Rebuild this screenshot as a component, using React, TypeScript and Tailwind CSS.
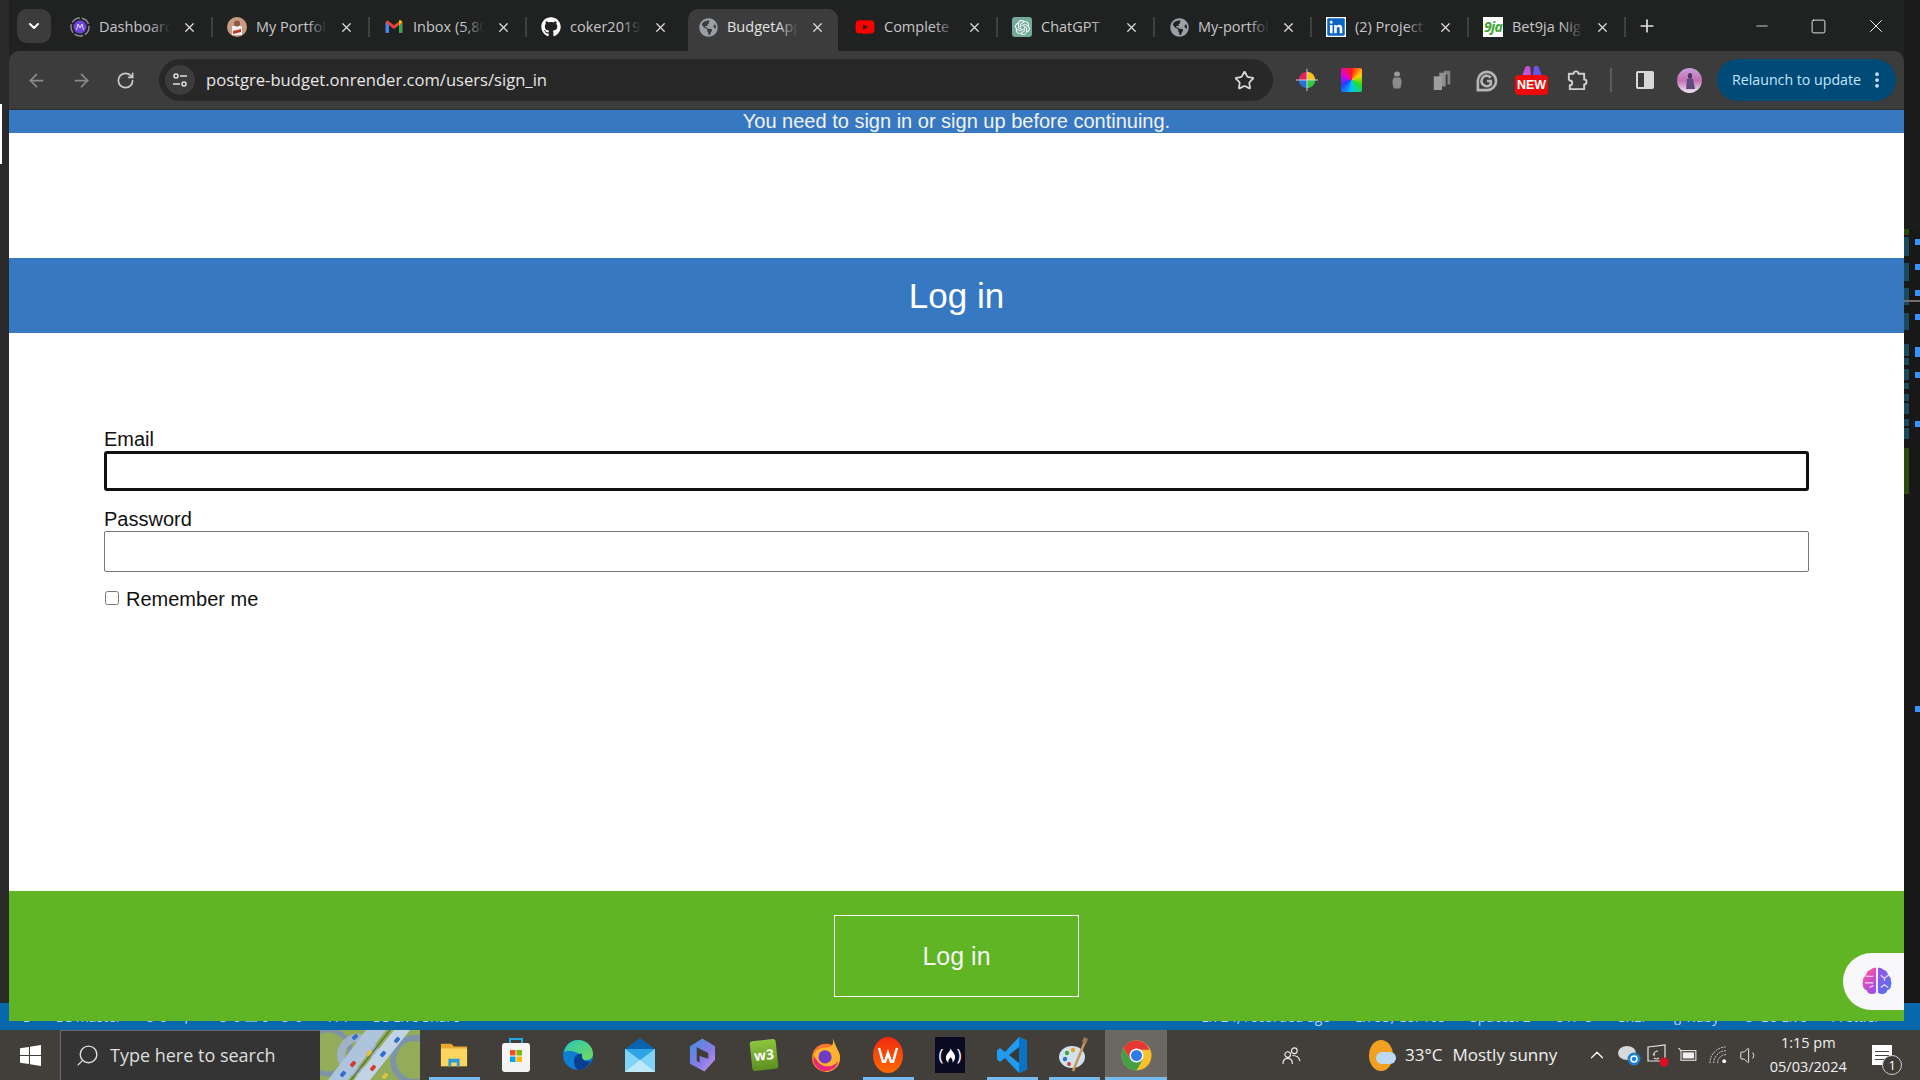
import type { ReactNode } from "react";
import {
  ArrowLeft,
  ArrowRight,
  ChevronDown,
  ChevronUp,
  EllipsisVertical,
  Minus,
  Plus,
  RotateCw,
  Search,
  Square,
  Star,
  Volume1,
  X,
} from "lucide-react";
import { FaGlobeAmericas, FaGithub, FaLinkedin, FaYoutube } from "react-icons/fa";
import { SiOpenai } from "react-icons/si";

const GmailIcon = () => (
  <svg viewBox="0 0 24 24" className="w-5 h-5">
    <path d="M2 6v13h4V10l6 4.500 6-4.500v9h4V6l-2-2-8 6-8-6z" fill="#ea4335" />
    <path d="M2 6v13h4V10z" fill="#4285f4" />
    <path d="M18 10v9h4V6z" fill="#34a853" />
    <path d="M18 4l2 0 2 2-4 4z" fill="#fbbc04" />
  </svg>
);

const DashboardIcon = () => (
  <svg viewBox="0 0 20 20" className="w-5 h-5">
    <circle cx="10" cy="10" r="9" fill="none" stroke="#8a8a94" strokeWidth="1.500" strokeDasharray="9 2" />
    <circle cx="10" cy="10" r="6.500" fill="#6d46e0" />
    <path d="M6.500 13l1.500-6 2 4 2-4 1.500 6" fill="none" stroke="#e6dcff" strokeWidth="1" />
  </svg>
);

const AvatarIcon = ({ tone = "#c99b84" }: { tone?: string }) => (
  <svg viewBox="0 0 20 20" className="w-full h-full">
    <circle cx="10" cy="10" r="10" fill={tone} />
    <rect x="5" y="9" width="10" height="9" fill="#f2efec" />
    <circle cx="10" cy="6.500" r="3" fill="#8a5a44" />
    <path d="M6 14l8-2v3l-8 2z" fill="#c0392b" />
  </svg>
);

const tabs: { title: string; icon: ReactNode; active?: boolean }[] = [
  { title: "Dashboard", icon: <DashboardIcon /> },
  { title: "My Portfolio", icon: <span className="block w-5 h-5"><AvatarIcon /></span> },
  { title: "Inbox (5,807)", icon: <GmailIcon /> },
  { title: "coker2019", icon: <FaGithub className="w-5 h-5 text-white" /> },
  { title: "BudgetApp", icon: <FaGlobeAmericas className="w-[19px] h-[19px] text-[#9aa0a6]" />, active: true },
  { title: "Complete", icon: <FaYoutube className="w-[22px] h-[22px] text-[#ff0000]" /> },
  {
    title: "ChatGPT",
    icon: (
      <span className="w-5 h-5 rounded-[3px] bg-[#74aa9c] flex items-center justify-center">
        <SiOpenai className="w-[15px] h-[15px] text-white" />
      </span>
    ),
  },
  { title: "My-portfolio", icon: <FaGlobeAmericas className="w-[19px] h-[19px] text-[#9aa0a6]" /> },
  { title: "(2) Project", icon: <FaLinkedin className="w-5 h-5 text-[#0a66c2] bg-white" /> },
  {
    title: "Bet9ja Nigeria",
    icon: (
      <span className="w-5 h-5 bg-white text-[#3fa535] text-[14px] leading-5 font-bold italic text-center tracking-tighter">9ja</span>
    ),
  },
];

function Tab({ title, icon, active }: { title: string; icon: ReactNode; active?: boolean }) {
  const hideSep = active || title === "coker2019";
  return (
    <div className="relative w-[157px] h-[42px] shrink-0 flex items-center">
      {active && <div className="absolute left-[4px] right-[3px] top-0 bottom-0 bg-[#3c3c3c] rounded-t-[10px]" />}
      <div className="relative flex items-center pl-[14px] w-full -mt-[6px]">
        <span className="w-5 h-5 shrink-0 flex items-center justify-center">{icon}</span>
        <div className="relative ml-[9px] w-[71px] overflow-hidden whitespace-nowrap">
          <span className={active ? "text-[#e3e3e3]" : "text-[#c7c7c7]"}>{title}</span>
          <div
            className={`absolute right-0 top-0 bottom-0 w-5 bg-gradient-to-r from-transparent ${
              active ? "to-[#3c3c3c]" : "to-[#202222]"
            }`}
          />
        </div>
        <X className="ml-[12px] w-[15px] h-[15px] text-[#dcdcdc]" strokeWidth={2} />
      </div>
      {!hideSep && <div className="absolute right-0 top-[8px] w-[2px] h-5 bg-[#3f4141]" />}
    </div>
  );
}

const ColorWheel = () => (
  <svg viewBox="0 0 24 24" className="w-[22px] h-[22px]">
    <path d="M12 12L12 3A9 9 0 0 1 21 12z" fill="#f0c419" />
    <path d="M12 12L21 12A9 9 0 0 1 12 21z" fill="#2ecc40" />
    <path d="M12 12L12 21A9 9 0 0 1 3 12z" fill="#2a6fdb" />
    <path d="M12 12L3 12A9 9 0 0 1 12 3z" fill="#e0245e" />
    <path d="M12 0v24M0 12h24" stroke="#ddd" strokeWidth="1" />
  </svg>
);

const RainbowSquare = () => (
  <span className="block w-[21px] h-[24px] rounded-[2px] bg-[conic-gradient(#ff1a1a,#ffd000,#22dd22,#00c8ff,#2040ff,#e000e0,#ff1a1a)]" />
);

const GreyBottle = () => (
  <svg viewBox="0 0 14 24" className="w-[12px] h-[24px]">
    <ellipse cx="7" cy="5" rx="3.500" ry="3" fill="#9a9a9a" />
    <path d="M3 9h8l1.500 5-1.500 8H3l-1.500-8z" fill="#8c8c8c" />
  </svg>
);

const CopyPages = () => (
  <svg viewBox="0 0 24 24" className="w-[22px] h-[22px]" fill="#9e9e9e">
    <path d="M14 2h7v15h-3V6h-4z" opacity="0.7" />
    <path d="M9 4h7v15H9z" opacity="0.85" />
    <path d="M3 8h9v15H3z" />
  </svg>
);

const GrammarlyG = () => (
  <svg viewBox="0 0 24 24" className="w-[23px] h-[23px]" fill="none" stroke="#b5b5b5" strokeWidth="2.800">
    <path d="M3 22V12a9.500 9.500 0 1 1 9.500 10z" />
    <path d="M16.500 9a5.500 5.500 0 1 0 0 7V12.500H12.500" />
  </svg>
);

const NewBadge = () => (
  <div className="flex flex-col items-center w-[33px]">
    <svg viewBox="0 0 24 12" className="w-[22px] h-[11px] -mb-[1px]">
      <path d="M1 12L5 2q2-2 5 0l1 10z" fill="#c552d8" />
      <path d="M13 12l1-10q3-2 5 0l4 10z" fill="#6a55e8" />
    </svg>
    <span className="w-[33px] h-[20px] rounded-[4px] bg-[#ee0a0a] text-white text-[12.500px] leading-5 font-bold text-center font-['Liberation_Sans',sans-serif]">
      NEW
    </span>
  </div>
);

const PuzzleIcon = () => (
  <svg viewBox="0 0 24 24" className="w-[23px] h-[23px]" fill="none" stroke="#d0d0d0" strokeWidth="2" strokeLinejoin="round">
    <path d="M4 5h5a2.500 2.500 0 0 1 5 0h6v6a2.500 2.500 0 0 1 0 5v5H5v-4a2.500 2.500 0 0 0 0-5l-1-1z" />
  </svg>
);

const SidePanelIcon = () => (
  <span className="w-[18px] h-[18px] rounded-[2px] border-2 border-[#d8d8d8] flex justify-end">
    <span className="w-[8px] bg-[#d8d8d8]" />
  </span>
);

const SiteInfoIcon = () => (
  <svg viewBox="0 0 16 16" className="w-[16px] h-[16px]" fill="none" stroke="#e0e0e0" strokeWidth="1.500">
    <circle cx="4" cy="4" r="2" />
    <path d="M8 4h7M1 12h7" />
    <circle cx="12" cy="12" r="2" />
  </svg>
);

const ProfilePicture = () => (
  <svg viewBox="0 0 25 25" className="w-[25px] h-[25px]">
    <defs>
      <linearGradient id="sky" x1="0" y1="0" x2="0" y2="1">
        <stop offset="0" stopColor="#c9a0dc" />
        <stop offset="0.5" stopColor="#c46fb4" />
        <stop offset="1" stopColor="#efe8f2" />
      </linearGradient>
    </defs>
    <circle cx="12.500" cy="12.500" r="12.500" fill="url(#sky)" />
    <ellipse cx="13" cy="8" rx="2.200" ry="3" fill="#4c3a62" />
    <path d="M10 11h6l2 10H9z" fill="#5e4a7c" />
  </svg>
);

function BrowserChrome() {
  return (
    <div className="font-['Open_Sans',sans-serif]">
      <div className="h-[51px] bg-[#202222] flex text-[14.500px] pt-[9px] pl-[8px]">
        <div className="w-[34px] h-[34px] mr-[5px] rounded-[10px] bg-[#3c3c3c] flex items-center justify-center shrink-0">
          <ChevronDown className="w-[16px] h-[16px] text-white" strokeWidth={3} />
        </div>
        {tabs.map((t) => (
          <Tab key={t.title} {...t} />
        ))}
        <div className="w-[42px] h-[34px] flex items-center justify-center shrink-0">
          <Plus className="w-[20px] h-[20px] text-[#e0e0e0]" strokeWidth={2} />
        </div>
        <div className="ml-auto flex h-[34px] text-white">
          <div className="w-[57px] flex items-center justify-center">
            <Minus className="w-[18px] h-[18px]" strokeWidth={1} />
          </div>
          <div className="w-[57px] flex items-center justify-center">
            <Square className="w-[17px] h-[17px]" strokeWidth={1.200} />
          </div>
          <div className="w-[57px] flex items-center justify-center">
            <X className="w-[22px] h-[22px]" strokeWidth={1} />
          </div>
        </div>
      </div>
      <div className="h-[59px] bg-[#3c3c3c] flex items-center rounded-t-[10px] pr-[8px] border-b border-[#2e2e2e]">
        <div className="w-[150px] flex shrink-0 items-center pl-[17px] gap-[24px] text-[#8a8a8a]">
          <ArrowLeft className="w-[21px] h-[21px]" />
          <ArrowRight className="w-[21px] h-[21px]" />
          <RotateCw className="w-[19px] h-[19px] text-[#c8c8c8]" strokeWidth={2.200} />
        </div>
        <div className="w-[1114px] h-[42px] rounded-full bg-[#282828] flex items-center pl-[6px] pr-[18px] shrink-0">
          <span className="w-[30px] h-[30px] rounded-full bg-[#3c3c3c] flex items-center justify-center">
            <SiteInfoIcon />
          </span>
          <span className="ml-[11px] mt-[1px] text-[16.600px] text-[#e6e6e6]">postgre-budget.onrender.com/users/sign_in</span>
          <Star className="ml-auto w-[21px] h-[21px] text-[#d8d8d8]" strokeWidth={2} />
        </div>
        <div className="flex items-center ml-[11px]">
          <ToolSlot><ColorWheel /></ToolSlot>
          <ToolSlot><RainbowSquare /></ToolSlot>
          <ToolSlot><GreyBottle /></ToolSlot>
          <ToolSlot><CopyPages /></ToolSlot>
          <ToolSlot><GrammarlyG /></ToolSlot>
          <ToolSlot><NewBadge /></ToolSlot>
          <ToolSlot><PuzzleIcon /></ToolSlot>
          <div className="w-[2px] h-[24px] bg-[#5c5c5c] ml-[11px] mr-[10px]" />
          <div className="w-[45px] flex justify-center"><SidePanelIcon /></div>
          <div className="w-[45px] flex justify-center"><ProfilePicture /></div>
        </div>
        <div className="ml-[5px] w-[179px] h-[42px] rounded-full bg-[#004a77] flex items-center pl-[15px] text-[14.200px] text-[#c2e7ff] shrink-0">
          Relaunch to update
          <EllipsisVertical className="ml-[6px] w-[20px] h-[20px]" strokeWidth={2.500} />
        </div>
      </div>
    </div>
  );
}

function ToolSlot({ children }: { children: ReactNode }) {
  return <div className="w-[45px] h-[42px] flex items-center justify-center">{children}</div>;
}

function LoginPage() {
  return (
    <div className="relative flex-1 min-h-0 flex flex-col bg-white font-['Liberation_Sans',sans-serif] text-[#111]">
      <div className="h-[23px] bg-[#3778c2] text-center text-[20px] leading-[23px] text-[#f2f2f2]">
        You need to sign in or sign up before continuing.
      </div>
      <div className="h-[125px]" />
      <h1 className="h-[75px] bg-[#3778c2] text-center text-[35px] leading-[76px] text-white">Log in</h1>
      <form className="flex-1 px-[95px] pt-[95px] text-[20px] leading-[23px]">
        <label className="block">Email</label>
        <input
          type="email"
          className="block w-full h-[40px] border-[3px] border-[#101010] rounded-[3px] outline-none bg-white"
        />
        <label className="block mt-[17px]">Password</label>
        <input
          type="password"
          className="block w-full h-[41px] border border-[#767676] rounded-[2px] outline-none bg-white"
        />
        <div className="flex items-center mt-[16px]">
          <input type="checkbox" className="w-[14px] h-[14px] ml-[1px] -mt-[3px]" />
          <label className="ml-[7px]">Remember me</label>
        </div>
      </form>
      <div className="h-[130px] bg-[#5fb523] flex items-center justify-center">
        <button
          type="button"
          className="w-[245px] h-[82px] border border-white text-[25px] text-[#f4f4f4] -mt-[1px] pt-[2px]"
        >
          Log in
        </button>
      </div>
      {/* floating helper button sits over the page */}
      <div className="absolute right-0 bottom-[11px] w-[61px] h-[57px] rounded-l-full bg-[#f8f8fa] flex items-center pl-[19px]">
        <svg viewBox="0 0 32 30" className="w-[30px] h-[28px] -mt-[3px]">
          <defs>
            <linearGradient id="brainL" x1="0" y1="0" x2="0.6" y2="1">
              <stop offset="0" stopColor="#f79a3c" />
              <stop offset="0.4" stopColor="#ea4fb0" />
              <stop offset="1" stopColor="#a44ee6" />
            </linearGradient>
            <linearGradient id="brainR" x1="0" y1="0" x2="1" y2="1">
              <stop offset="0" stopColor="#9a52ea" />
              <stop offset="1" stopColor="#4a78f2" />
            </linearGradient>
          </defs>
          <path d="M15 2v26q-1 2-5 2-4 0-5-4-4-1-4-5-1-3 0-5 0-4 3-6 1-5 5-6 3-3 6-2z" fill="url(#brainL)" />
          <path d="M17 2v26q1 2 5 2 4 0 5-4 4-1 4-5 1-3 0-5 0-4-3-6-1-5-5-6-3-3-6-2z" fill="url(#brainR)" />
          <path d="M4 11h8M3 18h9M8 23l4-2M20 10l4 3 4-3M24 13v3M20 23l4-3 4 3" fill="none" stroke="#e9dcff" strokeWidth="1.300" />
        </svg>
      </div>
    </div>
  );
}

// vs code minimap marks peeking out behind the browser window
const minimapMarks = [
  "h-[6px] bg-[#2d4a0e]",
  "mt-[2px] h-[19px] bg-[#1a4a5e]",
  "mt-[7px] h-[18px] bg-[#1a4a5e]",
  "mt-[7px] h-[17px] bg-[#1a4a5e]",
  "mt-[8px] h-[17px] bg-[#1a4a5e]",
  "mt-[14px] h-[12px] bg-[#1a4a5e]",
  "mt-[2px] h-[7px] bg-[#1a4a5e]",
  "mt-[4px] h-[11px] bg-[#1a4a5e]",
  "mt-[3px] h-[6px] bg-[#1a4a5e]",
  "mt-[5px] h-[7px] bg-[#1a4a5e]",
  "mt-[2px] h-[11px] bg-[#1a4a5e]",
  "mt-[5px] h-[7px] bg-[#1a4a5e]",
  "mt-[2px] h-[11px] bg-[#1a4a5e]",
  "mt-[9px] h-[46px] bg-[#2d4a0e]",
];

const gutterMarks = [
  "mt-[10px] h-[6px]",
  "mt-[19px] h-[6px]",
  "mt-[20px] h-[6px]",
  "mt-[18px] h-[6px]",
  "mt-[27px] h-[10px]",
  "mt-[15px] h-[6px]",
  "mt-[43px] h-[6px]",
  "mt-[279px] h-[6px]",
];

function RightStrip() {
  return (
    <div className="relative w-[16px] shrink-0 flex flex-col bg-[#181818]">
      <div className="h-[229px] bg-[#1c1c1c]" />
      <div className="flex flex-1 justify-between">
        <div className="w-[5px] flex flex-col">
          {minimapMarks.map((c, i) => (
            <div key={i} className={c} />
          ))}
        </div>
        <div className="w-[5px] flex flex-col">
          {gutterMarks.map((c, i) => (
            <div key={i} className={`${c} bg-[#3794ff]`} />
          ))}
        </div>
      </div>
      <div className="absolute left-0 right-0 top-[300px] h-[2px] bg-[#6f6f6f]" />
      <div className="h-[18px] bg-[#0868ae]" />
    </div>
  );
}

function LeftStrip() {
  return (
    <div className="w-[9px] shrink-0 flex flex-col bg-[#2a2a2a]">
      <div className="h-[104px]" />
      <div className="w-[2px] h-[60px] bg-white" />
      <div className="flex-1" />
      <div className="h-[18px] bg-[#0868ae]" />
    </div>
  );
}

const statusLeft = [
  { text: "⌥", cls: "ml-[14px]" },
  { text: "⎇ master", cls: "ml-[26px]" },
  { text: "⊙ 0", cls: "ml-[22px]" },
  { text: "⚲", cls: "ml-[14px]" },
  { text: "⊗ 0 ⚠ 0", cls: "ml-[26px]" },
  { text: "⊙ 0", cls: "ml-[10px]" },
  { text: "A 1", cls: "ml-[26px]" },
  { text: "⎇ Live Share", cls: "ml-[24px]" },
];

const statusRight = [
  "Ln 24, recorded ago",
  "Ln 53, Col 105",
  "Spaces: 2",
  "UTF-8",
  "CRLF",
  "{} Ruby",
  "⊙ Go Live",
  "Prettier",
];

// text of the editor status bar, mostly hidden: only the bottom edge of the glyphs shows
function StatusBar() {
  return (
    <div className="h-[9px] bg-[#0868ae] overflow-hidden flex justify-between text-[#b8d4ea] text-[14px] leading-[18px] font-['Open_Sans',sans-serif] whitespace-nowrap">
      <div className="flex -mt-[13px]">
        {statusLeft.map((s) => (
          <span key={s.text + s.cls} className={s.cls}>
            {s.text}
          </span>
        ))}
      </div>
      <div className="flex gap-[24px] -mt-[13px] pr-[40px]">
        {statusRight.map((s) => (
          <span key={s}>{s}</span>
        ))}
      </div>
    </div>
  );
}

const SearchPicture = () => (
  <svg viewBox="0 0 100 50" className="w-[100px] h-[50px] shrink-0">
    <rect width="100" height="50" fill="#93ac5a" />
    <circle cx="8" cy="22" r="22" fill="none" stroke="#7f93a8" strokeWidth="5" />
    <circle cx="95" cy="30" r="22" fill="none" stroke="#7f93a8" strokeWidth="6" />
    <circle cx="38" cy="25" r="17" fill="none" stroke="#9fb2c6" strokeWidth="8" />
    <path d="M46 0h20L28 50H8z" fill="#aec3dc" />
    <path d="M74 0h16L50 50H34z" fill="#c3d3e6" />
    <path d="M70 0L31 50" stroke="#5d7a30" strokeWidth="1.500" />
    <rect x="32" y="5" width="6" height="4" rx="1" fill="#2f6fd0" transform="rotate(-40 35 7)" />
    <rect x="46" y="21" width="6" height="4" rx="1" fill="#e3c23c" transform="rotate(-50 49 23)" />
    <rect x="60" y="22" width="6" height="4" rx="1" fill="#2f6fd0" transform="rotate(-50 63 24)" />
    <rect x="74" y="8" width="6" height="4" rx="1" fill="#2f6fd0" transform="rotate(-50 77 10)" />
    <rect x="30" y="32" width="6" height="4" rx="1" fill="#d04030" transform="rotate(-50 33 34)" />
    <rect x="50" y="36" width="6" height="4" rx="1" fill="#d04030" transform="rotate(-50 53 38)" />
    <rect x="20" y="42" width="6" height="4" rx="1" fill="#2f6fd0" transform="rotate(-50 23 44)" />
    <rect x="62" y="44" width="6" height="4" rx="1" fill="#e3c23c" transform="rotate(-50 65 46)" />
  </svg>
);

const WindowsLogo = () => (
  <svg viewBox="0 0 20 20" className="w-[21px] h-[21px]" fill="#fff">
    <path d="M0 3l8.500-1.200V9.500H0zM9.500 1.700L20 0v9.500H9.500zM0 10.500h8.500v7.700L0 17zM9.500 10.500H20V20L9.500 18.400z" />
  </svg>
);

const appIcons: { key: string; node: ReactNode; running?: boolean; active?: boolean }[] = [
  {
    key: "explorer",
    running: true,
    node: (
      <svg viewBox="0 0 30 28" className="w-[28px] h-[28px]">
        <path d="M1 2h11l3 3h14v21H1z" fill="#e8a92c" />
        <rect x="1" y="7" width="28" height="19" fill="#fbd55f" />
        <path d="M9 18h12v8h-3v-4h-6v4H9z" fill="#2b9be0" />
      </svg>
    ),
  },
  {
    key: "store",
    node: (
      <svg viewBox="0 0 30 36" className="w-[30px] h-[36px]">
        <path d="M9 6V2h12v4" fill="none" stroke="#21a6e8" strokeWidth="2" />
        <rect x="1" y="6" width="28" height="29" rx="3" fill="#f4f4f4" />
        <rect x="9" y="13" width="5.500" height="5.500" fill="#f25022" />
        <rect x="15.500" y="13" width="5.500" height="5.500" fill="#7fba00" />
        <rect x="9" y="19.500" width="5.500" height="5.500" fill="#00a4ef" />
        <rect x="15.500" y="19.500" width="5.500" height="5.500" fill="#ffb900" />
      </svg>
    ),
  },
  {
    key: "edge",
    node: (
      <svg viewBox="0 0 32 32" className="w-[32px] h-[36px]">
        <defs>
          <linearGradient id="edgeA" x1="0" y1="0" x2="1" y2="1">
            <stop offset="0" stopColor="#2ec4b6" />
            <stop offset="1" stopColor="#6fdc5c" />
          </linearGradient>
        </defs>
        <circle cx="16" cy="16" r="15" fill="#0c7fd4" />
        <path d="M2 13C4 5 10 1 16 1c9 0 15 7 15 14 0 4-3 6-8 6-3 0-4-2-3-4-4-5-14-6-18-4z" fill="url(#edgeA)" />
        <path d="M12 22c0-5 4-8 8-7-1 5 3 9 9 7-3 6-8 9-13 9-3-2-4-5-4-9z" fill="#0a3d8f" />
      </svg>
    ),
  },
  {
    key: "mail",
    node: (
      <svg viewBox="0 0 30 34" className="w-[30px] h-[34px]">
        <path d="M0 11L15 0l15 11v23H0z" fill="#0a64ad" />
        <path d="M0 11h30v23H0z" fill="#2aa5e6" />
        <path d="M0 11l15 11 15-11v23H0z" fill="#7fd4f7" />
        <path d="M0 34l15-12 15 12z" fill="#bfe9fb" />
      </svg>
    ),
  },
  {
    key: "copilot",
    node: (
      <svg viewBox="0 0 28 34" className="w-[27px] h-[34px]">
        <defs>
          <linearGradient id="copA" x1="0" y1="0" x2="1" y2="1">
            <stop offset="0" stopColor="#3f8fe0" />
            <stop offset="0.6" stopColor="#8a7ae8" />
            <stop offset="1" stopColor="#c79be8" />
          </linearGradient>
        </defs>
        <path d="M14 0l13 8v14l-11 12-15-8V8z" fill="url(#copA)" />
        <path d="M8 9l12 6v6l-9-3v7L8 23z" fill="#403d39" />
      </svg>
    ),
  },
  {
    key: "w3",
    node: (
      <span className="w-[26px] h-[30px] rounded-[3px] bg-[linear-gradient(#8cc63f,#5d8f1e)] -rotate-6 text-white text-[14px] leading-[30px] font-bold text-center">
        w3
      </span>
    ),
  },
  {
    key: "firefox",
    node: (
      <svg viewBox="0 0 32 36" className="w-[30px] h-[36px]">
        <circle cx="16" cy="21" r="15" fill="#f9772e" />
        <path d="M16 36a15 15 0 0 0 14-20L23 0c2 8-2 10-7 10C8 10 4 14 3 18l8 14z" fill="#ffb230" />
        <path d="M3 20a13 13 0 0 0 26 4c-4 7-14 8-20 3z" fill="#e8247c" />
        <circle cx="15" cy="20" r="7" fill="#6e3bc4" />
      </svg>
    ),
  },
  {
    key: "wps",
    running: true,
    node: (
      <span className="w-[30px] h-[36px] rounded-[50%] bg-[linear-gradient(#f02a10,#ff6a00)] flex items-center justify-center">
        <svg viewBox="0 0 20 16" className="w-[20px] h-[16px]">
          <path d="M1 1l4 14h2l3-9 3 9h2l4-14" fill="none" stroke="#fff" strokeWidth="2.500" />
        </svg>
      </span>
    ),
  },
  {
    key: "fcc",
    node: (
      <span className="w-[30px] h-[36px] bg-[#0a0a23] text-white text-[17px] flex items-center justify-center gap-[1px]">
        (
        <svg viewBox="0 0 12 16" className="w-[11px] h-[15px]">
          <path d="M6 0c1 3 5 5 5 10 0 3-2 5-3 6 1-2 0-4-2-6-1 2-3 3-2 6-2-1-3-3-3-6 0-4 5-6 5-10z" fill="#fff" />
        </svg>
        )
      </span>
    ),
  },
  {
    key: "vscode",
    running: true,
    node: (
      <svg viewBox="0 0 30 36" className="w-[30px] h-[36px]">
        <path d="M22 0l8 3.500v29L22 36 8 21l-5 4-3-2.500V13.500L3 11l5 4z" fill="#1f9cf0" />
        <path d="M22 10L12 18l10 8z" fill="#3b3935" />
        <path d="M22 0l8 3.500v29L22 36z" fill="#0a74c4" />
      </svg>
    ),
  },
  {
    key: "paint",
    running: true,
    node: (
      <svg viewBox="0 0 30 36" className="w-[30px] h-[36px]">
        <ellipse cx="13" cy="20" rx="13" ry="11" fill="#cfe3ee" />
        <circle cx="8" cy="16" r="2.200" fill="#3fa535" />
        <circle cx="14" cy="13" r="2.200" fill="#f0a020" />
        <circle cx="6" cy="22" r="2.200" fill="#2f6fd0" />
        <circle cx="10" cy="27" r="2" fill="#d04030" />
        <path d="M27 2L14 34" stroke="#c8955a" strokeWidth="2.500" />
        <path d="M25 0l4 2-2 5-4-2z" fill="#a07850" />
      </svg>
    ),
  },
  {
    key: "chrome",
    running: true,
    active: true,
    node: (
      <svg viewBox="0 0 32 32" className="w-[31px] h-[31px]">
        <circle cx="16" cy="16" r="15.500" fill="#fbc02d" />
        <path d="M16 .5A15.500 15.500 0 0 0 2.600 8.200L9.500 20 16 10h13.400A15.500 15.500 0 0 0 16 .5z" fill="#e53935" />
        <path d="M2.600 8.200A15.500 15.500 0 0 0 16 31.500L22.500 20H9.500z" fill="#43a047" />
        <circle cx="16" cy="16" r="7.200" fill="#fff" />
        <circle cx="16" cy="16" r="5.700" fill="#2f7be8" />
      </svg>
    ),
  },
];

function TrayIcons() {
  return (
    <div className="flex items-center text-white">
      <ChevronUp className="ml-[29px] w-[22px] h-[22px]" strokeWidth={1.300} />
      <svg viewBox="0 0 24 22" className="ml-[9px] w-[24px] h-[22px]">
        <ellipse cx="10" cy="9" rx="9" ry="7" fill="#d8d8d8" />
        <circle cx="17" cy="15" r="6.500" fill="#1c7fd8" />
        <circle cx="17" cy="15" r="3" fill="none" stroke="#fff" strokeWidth="1.500" />
      </svg>
      <svg viewBox="0 0 24 24" className="ml-[5px] w-[24px] h-[24px]" fill="none" stroke="#e6e6e6" strokeWidth="1.200">
        <path d="M2 4l17-2v16H2z" />
        <path d="M12 8a4 4 0 0 0-4 4l-1-1M8 15a4 4 0 0 0 5 0" />
        <circle cx="18" cy="19" r="4.500" fill="#e00b1c" stroke="none" />
      </svg>
      <svg viewBox="0 0 22 16" className="ml-[8px] w-[20px] h-[14px]" fill="none" stroke="#f0f0f0" strokeWidth="1.200">
        <rect x="3" y="3" width="17" height="11" />
        <rect x="5" y="5" width="13" height="7" fill="#f0f0f0" stroke="none" />
        <path d="M0 0l3 3" />
      </svg>
      <svg viewBox="0 0 20 20" className="ml-[11px] w-[19px] h-[19px]" fill="none" stroke="#d8d8d8" strokeWidth="1">
        <path d="M1 18A17 17 0 0 1 18 1M5 18A13 13 0 0 1 18 5M9 18A9 9 0 0 1 18 9" strokeDasharray="2 1" />
        <circle cx="16" cy="16" r="2" fill="#fff" stroke="none" />
      </svg>
      <Volume1 className="ml-[11px] w-[21px] h-[21px]" strokeWidth={1} />
    </div>
  );
}

function Taskbar() {
  return (
    <div className="h-[50px] shrink-0 flex bg-[#423f3b] text-[#f0f0f0] font-['Open_Sans',sans-serif]">
      <div className="w-[60px] flex items-center justify-center shrink-0">
        <WindowsLogo />
      </div>
      <div className="w-[260px] shrink-0 bg-[#343434] border-t border-l border-[#6a6a6a] flex items-center pl-[14px] text-[18px] text-[#dedede]">
        <Search className="w-[25px] h-[25px] -scale-x-100 mr-[10px]" strokeWidth={1.300} />
        Type here to search
      </div>
      <SearchPicture />
      <div className="w-[3px] shrink-0" />
      <div className="flex">
        {appIcons.map((a) => (
          <div
            key={a.key}
            className={`w-[62px] relative flex items-center justify-center ${a.active ? "bg-[#6b6863]" : ""}`}
          >
            {a.node}
            {a.running && (
              <div className={`absolute bottom-0 h-[3px] bg-[#76b9ed] ${a.active ? "left-0 right-0" : "left-[6px] right-[5px]"}`} />
            )}
          </div>
        ))}
      </div>
      <svg viewBox="0 0 20 20" className="ml-[115px] my-auto w-[19px] h-[19px]" fill="none" stroke="#f0f0f0" strokeWidth="1.200">
        <circle cx="6" cy="9" r="3" />
        <circle cx="13" cy="5" r="3" />
        <path d="M1 19c0-4 2-6 5-6s5 2 5 6M11 10c3 0 7 1 8 6" />
      </svg>
      <div className="ml-[68px] my-auto w-[24px] h-[31px] rounded-[50%] bg-[#f2a020] flex items-end justify-end shrink-0">
        <span className="w-[20px] h-[12px] mb-[7px] -mr-[3px] rounded-full bg-[#bcd8f2]" />
      </div>
      <div className="ml-[12px] flex items-center text-[17px] whitespace-nowrap">
        33°C
        <span className="ml-[10px]">Mostly sunny</span>
      </div>
      <TrayIcons />
      <div className="ml-[9px] w-[78px] flex flex-col items-center justify-center text-[14.500px] leading-[24px] whitespace-nowrap">
        <span>1:15 pm</span>
        <span>05/03/2024</span>
      </div>
      <div className="relative ml-[25px] my-auto w-[20px] h-[20px] bg-white flex flex-col justify-center gap-[3px] px-[3px]">
        <span className="h-[1px] bg-[#444]" />
        <span className="h-[1px] bg-[#444]" />
        <span className="h-[1px] bg-[#444]" />
        <span className="absolute -right-[10px] -bottom-[10px] w-[20px] h-[20px] rounded-full bg-[#403d39] border border-[#cfcfcf] text-[13px] leading-[18px] text-center text-white">
          1
        </span>
      </div>
    </div>
  );
}

export default function App() {
  return (
    <div className="w-screen h-screen overflow-hidden flex flex-col bg-[#202222]">
      <div className="h-[1021px] flex shrink-0">
        <LeftStrip />
        <div className="flex-1 min-w-0 flex flex-col">
          <BrowserChrome />
          <LoginPage />
        </div>
        <RightStrip />
      </div>
      <StatusBar />
      <Taskbar />
    </div>
  );
}
